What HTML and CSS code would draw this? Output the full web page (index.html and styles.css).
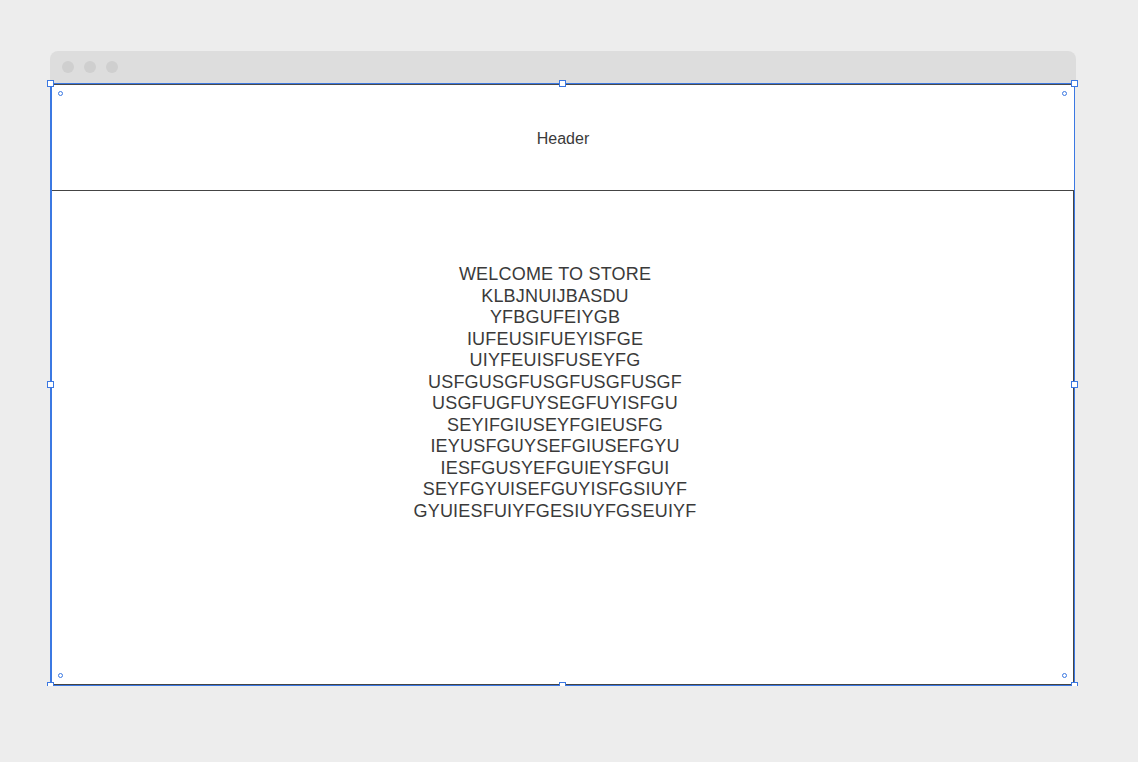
FILE: index.html
```html
<!DOCTYPE html>
<html>
<head>
<meta charset="utf-8">
<link rel="stylesheet" href="styles.css">
</head>
<body>
<div class="window">
  <div class="titlebar">
    <span class="dot"></span><span class="dot"></span><span class="dot"></span>
  </div>
  <div class="canvas">
    <header class="page-header">Header</header>
    <main class="page-body">
      <p>WELCOME TO STORE</p>
      <p>KLBJNUIJBASDU</p>
      <p>YFBGUFEIYGB</p>
      <p>IUFEUSIFUEYISFGE</p>
      <p>UIYFEUISFUSEYFG</p>
      <p>USFGUSGFUSGFUSGFUSGF</p>
      <p>USGFUGFUYSEGFUYISFGU</p>
      <p>SEYIFGIUSEYFGIEUSFG</p>
      <p>IEYUSFGUYSEFGIUSEFGYU</p>
      <p>IESFGUSYEFGUIEYSFGUI</p>
      <p>SEYFGYUISEFGUYISFGSIUYF</p>
      <p>GYUIESFUIYFGESIUYFGSEUIYF</p>
    </main>
    <div class="handles">
      <span class="sq tl"></span><span class="sq tm"></span><span class="sq tr"></span>
      <span class="sq ml"></span><span class="sq mr"></span>
      <span class="sq bl"></span><span class="sq bm"></span><span class="sq br"></span>
      <span class="ring r1"></span><span class="ring r2"></span>
      <span class="ring r3"></span><span class="ring r4"></span>
    </div>
  </div>
</div>
</body>
</html>
```

FILE: styles.css
```css
html, body {
  margin: 0;
  padding: 0;
  background: #ededed;
  font-family: "Liberation Sans", Arial, sans-serif;
  color: #3a3a3a;
}

.window {
  margin: 51px 0 0 50px;
  width: 1026px;
}

.titlebar {
  height: 32px;
  background: #dddddd;
  border-radius: 8px 8px 0 0;
  display: flex;
  align-items: center;
  gap: 10px;
  padding-left: 12px;
  box-sizing: border-box;
}

.dot {
  width: 12px;
  height: 12px;
  border-radius: 50%;
  background: #cfcfcf;
}

.canvas {
  position: relative;
  width: 1025px;
  height: 603px;
  box-sizing: border-box;
  background: #ffffff;
  border-top: 1px solid #3b78e2;
  border-left: 2px solid #3b78e2;
  border-right: 1px solid #3b78e2;
  border-bottom: 1px solid #3b78e2;
  display: flex;
  flex-direction: column;
}

.page-header {
  height: 106px;
  box-sizing: border-box;
  border-top: 1px solid #4a4a4a;
  padding-top: 2px;
  display: flex;
  align-items: center;
  justify-content: center;
  font-size: 16px;
  color: #3a3a3a;
}

.page-body {
  flex: 1;
  border-top: 1px solid #444444;
  border-right: 1px solid #444444;
  border-bottom: 1px solid #444444;
  padding-top: 73px;
  padding-right: 15px;
  text-align: center;
  font-size: 18px;
  line-height: 21.5px;
  letter-spacing: 0.2px;
  color: #3a3a3a;
}

.page-body p {
  margin: 0;
}

.handles {
  position: absolute;
  top: -1px;
  left: -2px;
  right: -1px;
  bottom: -1px;
  pointer-events: none;
}

.sq {
  position: absolute;
  width: 7px;
  height: 7px;
  box-sizing: border-box;
  background: #ffffff;
  border: 1px solid #3b78e2;
}

.tl { left: -3px; top: -3px; }
.tm { left: 509px; top: -3px; }
.tr { left: 1021px; top: -3px; }
.ml { left: -3px; top: 298px; }
.mr { left: 1021px; top: 298px; }
.bl { left: -3px; top: 599px; }
.bm { left: 509px; top: 599px; }
.br { left: 1021px; top: 599px; }

.ring {
  position: absolute;
  width: 5px;
  height: 5px;
  box-sizing: border-box;
  border-radius: 50%;
  background: #ffffff;
  border: 1px solid #3b78e2;
}

.r1 { left: 8px; top: 8px; }
.r2 { left: 1012px; top: 8px; }
.r3 { left: 8px; top: 590px; }
.r4 { left: 1012px; top: 590px; }
```
